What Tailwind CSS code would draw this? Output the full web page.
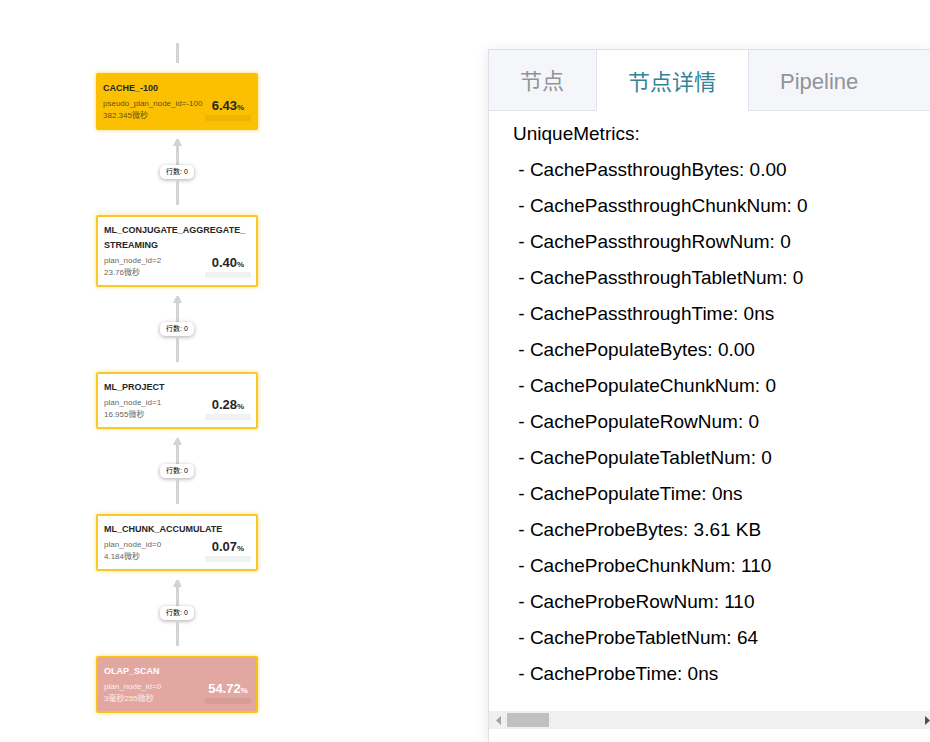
<!DOCTYPE html>
<html lang="zh-CN">
<head>
<meta charset="utf-8">
<meta name="viewport" content="width=device-width, initial-scale=1">
<title>Query Profile</title>
<script src="https://cdn.jsdelivr.net/npm/@tailwindcss/browser@4"></script>
</head>
<body class="bg-white font-['Liberation_Sans','Noto_Sans_CJK_SC',sans-serif]">
<main class="grid min-h-screen grid-cols-[488px_1fr] overflow-hidden">

  <!-- Execution plan -->
  <section aria-label="执行计划" class="flex flex-col items-start pt-[43px] pl-24">
    <div class="flex w-[162px] flex-col">
      <div class="mb-[10px] h-5 w-[3px] self-center bg-[#d3d3d3]"></div>

      <article class="rounded-[2px] border-2 border-[#fbc002] bg-[#fbc002] px-[5px] py-[6px] text-[#262626] shadow-[0_0_4px_#fbc00299]">
        <h2 class="text-[9px] leading-[15px] font-bold">CACHE_-100</h2>
        <div class="mt-[2px] flex h-6 justify-between">
          <div class="text-[8px] leading-[12px] whitespace-nowrap text-[#262626]/75"><p>pseudo_plan_node_id=-100</p><p>382.345微秒</p></div>
          <div class="flex w-[46px] shrink-0 flex-col items-center">
            <p class="h-[15px] text-[13px] leading-[15px] font-bold">6.43<span class="text-[8px] leading-none">%</span></p>
            <div class="mt-[2px] h-[6px] w-full bg-black/5"></div>
          </div>
        </div>
      </article>

      <div class="mt-[9px] mb-[10px] flex h-[66px] flex-col items-center">
        <svg class="h-[26px] w-[9px]" viewBox="0 0 9 26" fill="#d3d3d3"><path d="M3.400 0h2.200L9 7H6v19H3V7H0z"/></svg>
        <span class="h-[14px] w-[34px] rounded-[5px] bg-white text-center text-[7px] leading-[14px] text-black shadow-[0_1px_4px_#00000055]">行数: 0</span>
        <div class="w-[3px] flex-1 bg-[#d3d3d3]"></div>
      </div>

      <article class="rounded-[2px] border-2 border-[#fbc926] bg-white py-[6px] pr-[5px] pl-[6px] text-[#262626] shadow-[0_0_4px_#fbc00280]">
        <h2 class="text-[9px] leading-[15px] font-bold whitespace-nowrap">ML_CONJUGATE_AGGREGATE_<br>STREAMING</h2>
        <div class="mt-[2px] flex h-6 justify-between">
          <div class="text-[8px] leading-[12px] whitespace-nowrap text-[#262626]/75"><p>plan_node_id=2</p><p>23.76微秒</p></div>
          <div class="flex w-[46px] shrink-0 flex-col items-center">
            <p class="h-[15px] text-[13px] leading-[15px] font-bold">0.40<span class="text-[8px] leading-none">%</span></p>
            <div class="mt-[2px] h-[6px] w-full bg-[#f2f2f2]"></div>
          </div>
        </div>
      </article>

      <div class="mt-[9px] mb-[10px] flex h-[66px] flex-col items-center">
        <svg class="h-[26px] w-[9px]" viewBox="0 0 9 26" fill="#d3d3d3"><path d="M3.400 0h2.200L9 7H6v19H3V7H0z"/></svg>
        <span class="h-[14px] w-[34px] rounded-[5px] bg-white text-center text-[7px] leading-[14px] text-black shadow-[0_1px_4px_#00000055]">行数: 0</span>
        <div class="w-[3px] flex-1 bg-[#d3d3d3]"></div>
      </div>

      <article class="rounded-[2px] border-2 border-[#fbc926] bg-white py-[6px] pr-[5px] pl-[6px] text-[#262626] shadow-[0_0_4px_#fbc00280]">
        <h2 class="text-[9px] leading-[15px] font-bold">ML_PROJECT</h2>
        <div class="mt-[2px] flex h-6 justify-between">
          <div class="text-[8px] leading-[12px] whitespace-nowrap text-[#262626]/75"><p>plan_node_id=1</p><p>16.955微秒</p></div>
          <div class="flex w-[46px] shrink-0 flex-col items-center">
            <p class="h-[15px] text-[13px] leading-[15px] font-bold">0.28<span class="text-[8px] leading-none">%</span></p>
            <div class="mt-[2px] h-[6px] w-full bg-[#f2f2f2]"></div>
          </div>
        </div>
      </article>

      <div class="mt-[9px] mb-[10px] flex h-[66px] flex-col items-center">
        <svg class="h-[26px] w-[9px]" viewBox="0 0 9 26" fill="#d3d3d3"><path d="M3.400 0h2.200L9 7H6v19H3V7H0z"/></svg>
        <span class="h-[14px] w-[34px] rounded-[5px] bg-white text-center text-[7px] leading-[14px] text-black shadow-[0_1px_4px_#00000055]">行数: 0</span>
        <div class="w-[3px] flex-1 bg-[#d3d3d3]"></div>
      </div>

      <article class="rounded-[2px] border-2 border-[#fbc926] bg-white py-[6px] pr-[5px] pl-[6px] text-[#262626] shadow-[0_0_4px_#fbc00280]">
        <h2 class="text-[9px] leading-[15px] font-bold">ML_CHUNK_ACCUMULATE</h2>
        <div class="mt-[2px] flex h-6 justify-between">
          <div class="text-[8px] leading-[12px] whitespace-nowrap text-[#262626]/75"><p>plan_node_id=0</p><p>4.184微秒</p></div>
          <div class="flex w-[46px] shrink-0 flex-col items-center">
            <p class="h-[15px] text-[13px] leading-[15px] font-bold">0.07<span class="text-[8px] leading-none">%</span></p>
            <div class="mt-[2px] h-[6px] w-full bg-[#f2f2f2]"></div>
          </div>
        </div>
      </article>

      <div class="mt-[9px] mb-[10px] flex h-[66px] flex-col items-center">
        <svg class="h-[26px] w-[9px]" viewBox="0 0 9 26" fill="#d3d3d3"><path d="M3.400 0h2.200L9 7H6v19H3V7H0z"/></svg>
        <span class="h-[14px] w-[34px] rounded-[5px] bg-white text-center text-[7px] leading-[14px] text-black shadow-[0_1px_4px_#00000055]">行数: 0</span>
        <div class="w-[3px] flex-1 bg-[#d3d3d3]"></div>
      </div>

      <article class="rounded-[2px] border-2 border-[#fbc01a] bg-[#e3a7a1] py-[6px] pr-[5px] pl-[6px] text-white shadow-[0_0_4px_#fbc00280]">
        <h2 class="text-[9px] leading-[15px] font-bold">OLAP_SCAN</h2>
        <div class="mt-[2px] flex h-6 justify-between">
          <div class="text-[8px] leading-[12px] whitespace-nowrap text-white/80"><p>plan_node_id=0</p><p>3毫秒255微秒</p></div>
          <div class="flex w-[46px] shrink-0 flex-col items-center">
            <p class="h-[15px] text-[13px] leading-[15px] font-bold">54.72<span class="text-[8px] leading-none">%</span></p>
            <div class="mt-[2px] h-[6px] w-full bg-black/5"></div>
          </div>
        </div>
      </article>
    </div>
  </section>

  <!-- Node details -->
  <section aria-label="节点详情" class="mt-[49px] min-w-0 border-t border-l border-[#dfe1e6] bg-white shadow-[0_2px_12px_#0000001a]">
    <div role="tablist" class="flex h-[61px] text-[22px] leading-8 text-[#909399]">
      <button role="tab" aria-selected="false" class="border-r border-b border-[#dfe4ed] bg-[#f5f6fa] pt-1 pr-8 pl-[31px]">节点</button>
      <button role="tab" aria-selected="true" class="border-r border-[#dfe4ed] bg-white pt-1 pr-8 pl-[31px] text-[#348498]">节点详情</button>
      <div class="flex-1 border-b border-[#dfe4ed] bg-[#f5f6fa]"><button role="tab" aria-selected="false" class="h-full px-[31px] pt-1">Pipeline</button></div>
    </div>
    <div role="tabpanel">
      <div class="overflow-hidden pt-[5px] pb-[19px] pl-6 text-[19px] leading-9 whitespace-pre text-black"><p>UniqueMetrics:</p><p> - CachePassthroughBytes: 0.00</p><p> - CachePassthroughChunkNum: 0</p><p> - CachePassthroughRowNum: 0</p><p> - CachePassthroughTabletNum: 0</p><p> - CachePassthroughTime: 0ns</p><p> - CachePopulateBytes: 0.00</p><p> - CachePopulateChunkNum: 0</p><p> - CachePopulateRowNum: 0</p><p> - CachePopulateTabletNum: 0</p><p> - CachePopulateTime: 0ns</p><p> - CacheProbeBytes: 3.61 KB</p><p> - CacheProbeChunkNum: 110</p><p> - CacheProbeRowNum: 110</p><p> - CacheProbeTabletNum: 64</p><p> - CacheProbeTime: 0ns</p></div>
      <div class="flex h-[18px] items-center justify-between bg-[#f0f0f0]">
        <div class="flex items-center">
          <button aria-label="向左滚动" class="flex w-[18px] justify-center"><svg class="h-[9px] w-[5px]" viewBox="0 0 5 9" fill="#a3a3a3"><path d="M5 0v9L0 4.500z"/></svg></button>
          <div class="h-[14px] w-[42px] bg-[#c1c1c1]"></div>
        </div>
        <button aria-label="向右滚动"><svg class="h-[9px] w-[5px]" viewBox="0 0 5 9" fill="#505050"><path d="M0 0v9l5-4.500z"/></svg></button>
      </div>
    </div>
  </section>
</main>
</body>
</html>
